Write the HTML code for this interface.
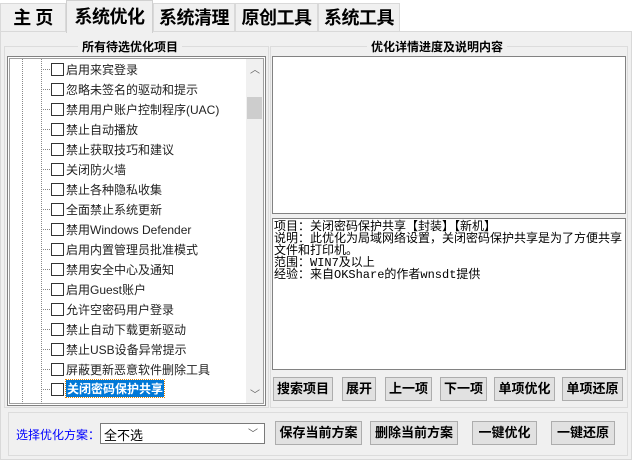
<!DOCTYPE html><html><head><meta charset="utf-8"><style>
*{box-sizing:border-box;margin:0;padding:0}
body{width:632px;height:460px;background:#f0f0f0;font-family:"Liberation Sans","Noto Sans CJK SC",sans-serif;font-size:12px;position:relative;overflow:hidden;color:#000}
.a{position:absolute}
.tab{position:absolute;top:3px;height:28px;border:1px solid #d9d9d9;border-bottom:none;background:#f0f0f0;font-size:18px;font-weight:bold;text-align:center;line-height:28px;letter-spacing:-0.5px}
.grp{position:absolute;border:1px solid #dcdcdc}
.btn{position:absolute;height:24px;background:#e1e1e1;border:1px solid #adadad;font-size:13px;font-weight:bold;text-align:center;line-height:22px}
.it{position:absolute;left:51px;height:14px;font-size:12px;white-space:nowrap;color:#222}
.it i{position:absolute;left:0;top:0;width:13px;height:13px;border:1px solid #333;background:#fff}
.it span{position:absolute;left:15px;top:-2px}
.it b{position:absolute;left:-10px;top:6px;width:9px;border-top:1px dotted #888}
.tx{font-family:"Liberation Mono","Noto Sans CJK SC",monospace;font-size:12px;line-height:12px}
</style></head><body>
<div class="a" style="left:0;top:0;width:632px;height:31px;background:#fff"></div>
<div class="tab" style="left:0;width:66px">主 页</div>
<div class="tab" style="left:153px;width:82px">系统清理</div>
<div class="tab" style="left:235px;width:83px">原创工具</div>
<div class="tab" style="left:318px;width:82px">系统工具</div>
<div class="a" style="left:0;top:31px;width:632px;height:429px;border:1px solid #d9d9d9;background:#f0f0f0"></div>
<div class="tab" style="left:66px;top:0;height:33px;width:87px;background:#f0f0f0;border-color:#d0d0d0;line-height:32px">系统优化</div>

<div class="grp" style="left:4px;top:46px;width:265px;height:362px"></div>
<div class="a" style="left:78px;top:38px;padding:0 4px;background:#f0f0f0;font-weight:bold;font-size:12px">所有待选优化项目</div>
<div class="a" style="left:7px;top:56px;width:259px;height:350px;border:1px solid #828282;background:#fff"></div>
<div class="a" style="left:9px;top:58px;width:255px;height:346px;border:1px solid #a0a0a0"></div>
<div class="a" style="left:22px;top:59px;height:345px;border-left:1px dotted #888"></div>
<div class="a" style="left:41px;top:59px;height:345px;border-left:1px dotted #888"></div>
<div class="a" style="left:246px;top:59px;width:17px;height:344px;background:#f0f0f0"></div>
<div class="a" style="left:247px;top:97px;width:15px;height:22px;background:#cdcdcd"></div>
<div class="a" style="left:250px;top:61px;font-size:10px;color:#606060">︿</div>
<div class="a" style="left:250px;top:386px;font-size:10px;color:#606060">﹀</div>

<div class="it" style="top:63px"><b></b><i></i><span>启用来宾登录</span></div>
<div class="it" style="top:83px"><b></b><i></i><span>忽略未签名的驱动和提示</span></div>
<div class="it" style="top:103px"><b></b><i></i><span>禁用用户账户控制程序(UAC)</span></div>
<div class="it" style="top:123px"><b></b><i></i><span>禁止自动播放</span></div>
<div class="it" style="top:143px"><b></b><i></i><span>禁止获取技巧和建议</span></div>
<div class="it" style="top:163px"><b></b><i></i><span>关闭防火墙</span></div>
<div class="it" style="top:183px"><b></b><i></i><span>禁止各种隐私收集</span></div>
<div class="it" style="top:203px"><b></b><i></i><span>全面禁止系统更新</span></div>
<div class="it" style="top:223px"><b></b><i></i><span>禁用Windows Defender</span></div>
<div class="it" style="top:243px"><b></b><i></i><span>启用内置管理员批准模式</span></div>
<div class="it" style="top:263px"><b></b><i></i><span>禁用安全中心及通知</span></div>
<div class="it" style="top:283px"><b></b><i></i><span>启用Guest账户</span></div>
<div class="it" style="top:303px"><b></b><i></i><span>允许空密码用户登录</span></div>
<div class="it" style="top:323px"><b></b><i></i><span>禁止自动下载更新驱动</span></div>
<div class="it" style="top:343px"><b></b><i></i><span>禁止USB设备异常提示</span></div>
<div class="it" style="top:363px"><b></b><i></i><span>屏蔽更新恶意软件删除工具</span></div>
<div class="it" style="top:383px"><b></b><i></i><span style="background:#0078d7;color:#fff;font-weight:bold;outline:1px dotted #e08000;padding:0 1px;top:-3px">关闭密码保护共享</span></div>

<div class="grp" style="left:270px;top:46px;width:358px;height:362px"></div>
<div class="a" style="left:367px;top:38px;padding:0 4px;background:#f0f0f0;font-weight:bold;font-size:12px">优化详情进度及说明内容</div>
<div class="a" style="left:272px;top:56px;width:354px;height:158px;border:1px solid #828282;background:#fff"></div>
<div class="a" style="left:272px;top:218px;width:354px;height:152px;border:1px solid #828282;background:#fff;padding:2px 1px" >
<div class="tx">项目：关闭密码保护共享【封装】【新机】<br>说明：此优化为局域网络设置，关闭密码保护共享是为了方便共享文件和打印机。<br>范围：WIN7及以上<br>经验：来自OKShare的作者wnsdt提供</div></div>
<div class="btn" style="left:273px;top:377px;width:60px">搜索项目</div>
<div class="btn" style="left:342px;top:377px;width:34px">展开</div>
<div class="btn" style="left:385px;top:377px;width:47px">上一项</div>
<div class="btn" style="left:440px;top:377px;width:47px">下一项</div>
<div class="btn" style="left:494px;top:377px;width:61px">单项优化</div>
<div class="btn" style="left:562px;top:377px;width:61px">单项还原</div>

<div class="grp" style="left:8px;top:412px;width:620px;height:44px"></div>
<div class="a" style="left:16px;top:426px;color:#0000ff;font-size:12px">选择优化方案：</div>
<div class="a" style="left:100px;top:423px;width:165px;height:21px;border:1px solid #7a7a7a;background:#fff;padding:1px 3px;font-size:13px">全不选<span style="position:absolute;right:6px;top:1px;font-size:10px;color:#555">﹀</span></div>
<div class="btn" style="left:275px;top:421px;width:87px">保存当前方案</div>
<div class="btn" style="left:370px;top:421px;width:88px">删除当前方案</div>
<div class="btn" style="left:472px;top:421px;width:65px">一键优化</div>
<div class="btn" style="left:551px;top:421px;width:64px">一键还原</div>
</body></html>
